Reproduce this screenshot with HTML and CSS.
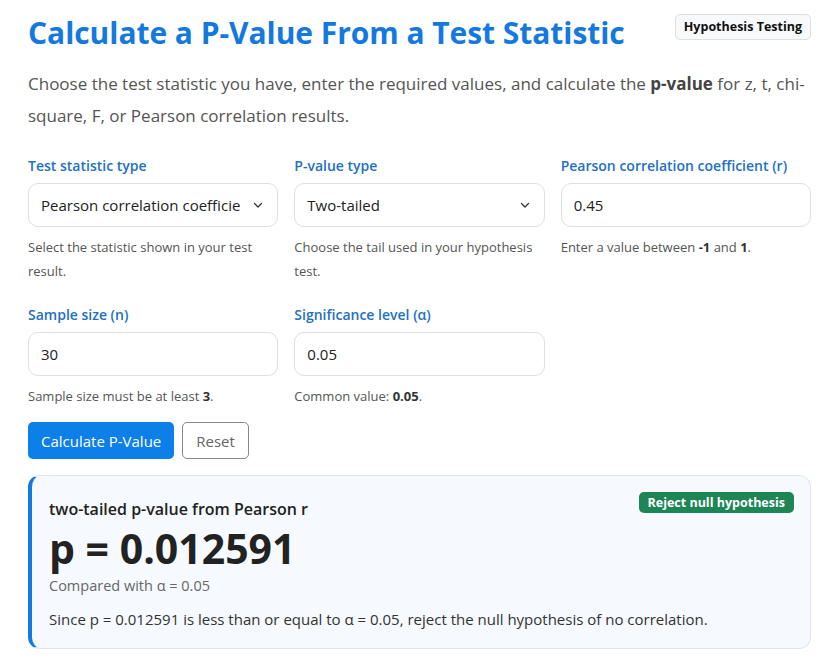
FILE: index.html
```html
<!DOCTYPE html>
<html>
  <head>
    <title>P-Value From a Test Statistic</title>
    <link rel="stylesheet" href="styles.css">
  </head>
  <body>
    <div id="container">
      <div class="header">
        <h1>Calculate a P-Value From a Test Statistic</h1>
        <span class="tag">Hypothesis Testing</span>
      </div>
      <p class="intro">
        Choose the test statistic you have, enter the required values, and calculate the
        <strong>p-value</strong> for z, t, chi-square, F, or Pearson correlation results.
      </p>

      <div class="fields">
        <div class="field">
          <label for="stat-type">Test statistic type</label>
          <div class="select-wrap">
            <select id="stat-type">
              <option>Pearson correlation coefficient (r)</option>
              <option>z statistic</option>
              <option>t statistic</option>
              <option>Chi-square statistic</option>
              <option>F statistic</option>
            </select>
            <svg class="chevron" width="12" height="12" viewBox="0 0 12 12">
              <path d="M2.5 4.5 L6 8 L9.5 4.5" fill="none" stroke="#333" stroke-width="1.3" stroke-linecap="round" stroke-linejoin="round"/>
            </svg>
          </div>
          <div class="help">Select the statistic shown in your test result.</div>
        </div>
        <div class="field">
          <label for="tail-type">P-value type</label>
          <div class="select-wrap">
            <select id="tail-type">
              <option>Two-tailed</option>
              <option>Left-tailed</option>
              <option>Right-tailed</option>
            </select>
            <svg class="chevron" width="12" height="12" viewBox="0 0 12 12">
              <path d="M2.5 4.5 L6 8 L9.5 4.5" fill="none" stroke="#333" stroke-width="1.3" stroke-linecap="round" stroke-linejoin="round"/>
            </svg>
          </div>
          <div class="help">Choose the tail used in your hypothesis test.</div>
        </div>
        <div class="field">
          <label for="r-value">Pearson correlation coefficient (r)</label>
          <input id="r-value" type="text" value="0.45">
          <div class="help">Enter a value between <strong>-1</strong> and <strong>1</strong>.</div>
        </div>
        <div class="field">
          <label for="sample-size">Sample size (n)</label>
          <input id="sample-size" type="text" value="30">
          <div class="help">Sample size must be at least <strong>3</strong>.</div>
        </div>
        <div class="field">
          <label for="alpha">Significance level (&alpha;)</label>
          <input id="alpha" type="text" value="0.05">
          <div class="help">Common value: <strong>0.05</strong>.</div>
        </div>
      </div>

      <div class="actions">
        <button class="btn-primary">Calculate P-Value</button>
        <button class="btn-reset">Reset</button>
      </div>

      <div class="result">
        <div class="result-top">
          <div class="result-title">two-tailed p-value from Pearson r</div>
          <span class="decision">Reject null hypothesis</span>
        </div>
        <div class="result-value">p = 0.012591</div>
        <div class="result-compare">Compared with &alpha; = 0.05</div>
        <p class="result-text">
          Since p = 0.012591 is less than or equal to &alpha; = 0.05, reject the null hypothesis of no correlation.
        </p>
      </div>
    </div>
  </body>
</html>
```

FILE: styles.css
```css
/* page layout */
body {
  font-family: "Open Sans", "Noto Sans", sans-serif;
  margin: 0;
  padding: 0;
  background-color: #fff;
  color: #222;
}
#container {
  padding: 10px 20px 20px 28px;
}

/* header */
.header {
  display: flex;
  justify-content: space-between;
  align-items: flex-start;
}
h1 {
  margin: 2px 0 0;
  font-size: 30px;
  font-weight: 700;
  color: #1479df;
  letter-spacing: -0.05px;
}
.tag {
  margin-top: 4px;
  padding: 3px 8px 4px;
  font-size: 12.5px;
  font-weight: 700;
  color: #111;
  background-color: #f8f9fa;
  border: 1px solid #dcdfe3;
  border-radius: 5px;
}
.intro {
  margin: 15px 0 24px;
  font-size: 17px;
  line-height: 32px;
  color: #555;
}
.intro strong {
  color: #444;
}

/* form fields */
.fields {
  display: grid;
  grid-template-columns: repeat(3, 1fr);
  column-gap: 16px;
  row-gap: 22px;
}
.field label {
  display: block;
  margin-bottom: 8px;
  font-size: 14px;
  font-weight: 600;
  color: #1d70c4;
}
.field input,
.field select {
  display: block;
  width: 100%;
  box-sizing: border-box;
  height: 44px;
  padding: 0 12px;
  font-family: inherit;
  font-size: 15px;
  color: #222;
  background-color: #fff;
  border: 1px solid #dcdfe3;
  border-radius: 10px;
}
.select-wrap {
  position: relative;
}
.field select {
  appearance: none;
  padding-right: 36px;
}
.chevron {
  position: absolute;
  right: 14px;
  top: 16px;
  pointer-events: none;
}
.help {
  margin-top: 8px;
  font-size: 13px;
  line-height: 24px;
  color: #555;
}
.help strong {
  color: #333;
}

/* buttons */
.actions {
  display: flex;
  gap: 8px;
  margin-top: 14px;
}
.btn-primary,
.btn-reset {
  height: 37px;
  padding: 0 13px;
  font-family: inherit;
  font-size: 15px;
  border-radius: 5px;
  cursor: pointer;
}
.btn-primary {
  background-color: #0d7fe8;
  color: #fff;
  border: none;
}
.btn-reset {
  background-color: #fff;
  color: #666;
  border: 1px solid #888;
}

/* result */
.result {
  margin-top: 16px;
  padding: 16px 16px 17px 17px;
  background-color: #f6f9fd;
  border: 1px solid #dde6f0;
  border-left: 4px solid #1479df;
  border-radius: 12px;
}
.result-top {
  display: flex;
  justify-content: space-between;
  align-items: flex-start;
}
.result-title {
  margin-top: 6px;
  font-size: 16px;
  font-weight: 600;
  color: #222;
}
.decision {
  padding: 2px 9px;
  font-size: 12.5px;
  font-weight: 700;
  color: #fff;
  background-color: #1e8555;
  border-radius: 5px;
}
.result-value {
  margin-top: 0;
  font-size: 41px;
  font-weight: 700;
  line-height: 56px;
  color: #222;
}
.result-compare {
  font-size: 14.5px;
  line-height: 20px;
  color: #666;
}
.result-text {
  margin: 11px 0 0;
  font-size: 15px;
  line-height: 24px;
  color: #333;
}
```
